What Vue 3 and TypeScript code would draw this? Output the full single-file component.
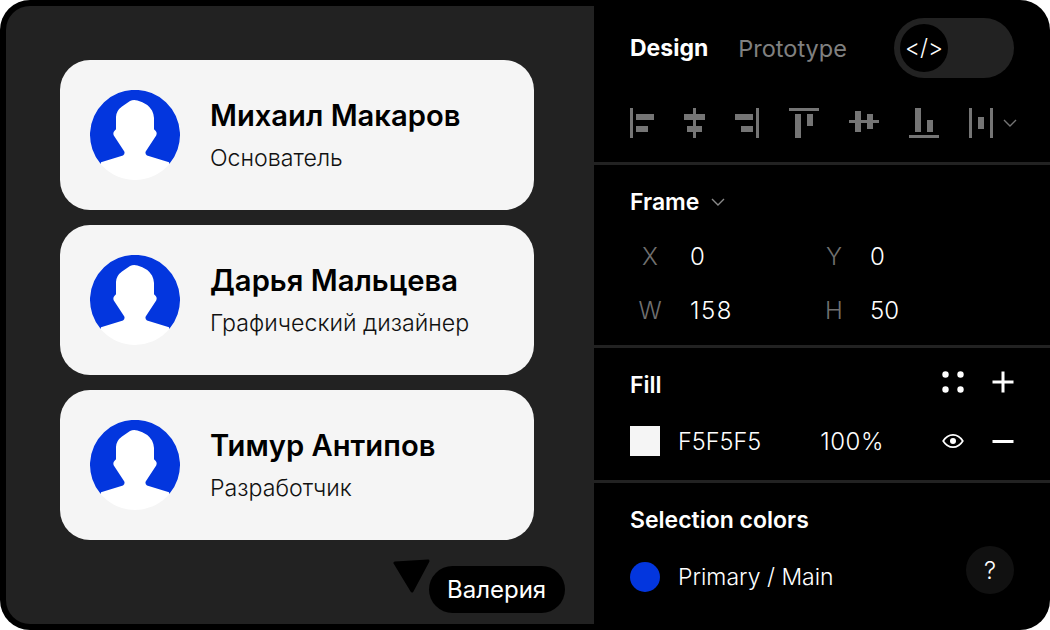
<template>
    <div class="frame">
        <section class="canvas">
            <div v-for="person in people" :key="person.name" class="card">
                <svg class="avatar" viewBox="0 0 90 90" width="90" height="90">
                    <circle cx="45" cy="45" r="45" fill="#fff" />
                    <path
                        fill="#0336DE"
                        d="M10.7 74 A45 45 0 1 1 79.3 74 L79 72.3 L57 65.4 Q54.8 64 55.7 61.5 L66.2 45.5 Q67.4 42.5 65.5 40.8 L64 39.2 L64 28 Q63.8 24 62 20.5 Q58 13.5 47.5 10.5 Q43.5 9.2 40 11 L32 16.5 Q26.3 20.5 26 27 L26 39.2 L24.6 40.8 Q22.6 42.5 23.8 45.5 L34.3 61.5 Q35.2 64 33 65.4 L11 72.3 Z"
                    />
                </svg>
                <div class="person">
                    <div class="person__name">{{ person.name }}</div>
                    <div class="person__role">{{ person.role }}</div>
                </div>
            </div>
            <svg class="cursor" viewBox="0 0 38 34" width="38" height="34">
                <path fill="#000" stroke="#000" stroke-width="3" stroke-linejoin="round" d="M2 4 L35 2 L19 32 Z" />
            </svg>
            <div class="tag">Валерия</div>
        </section>

        <aside class="panel">
            <div class="section section--top">
                <div class="tabs">
                    <span class="tab tab--active">Design</span>
                    <span class="tab">Prototype</span>
                    <div class="toggle">
                        <span class="toggle__knob">&lt;/&gt;</span>
                    </div>
                </div>
                <div class="aligns">
                    <svg v-for="(icon, i) in alignIcons" :key="i" class="align" :width="icon.w" height="30" :viewBox="`0 0 ${icon.w} 30`">
                        <rect v-for="(r, j) in icon.rects" :key="j" :x="r[0]" :y="r[1]" :width="r[2]" :height="r[3]" fill="#757575" />
                    </svg>
                    <svg class="aligns__more" width="14" height="8" viewBox="0 0 14 8">
                        <path d="M1 1 L7 7 L13 1" fill="none" stroke="#757575" stroke-width="1.4" />
                    </svg>
                </div>
            </div>

            <div class="section section--frame">
                <div class="title">
                    Frame
                    <svg class="title__chevron" width="14" height="8" viewBox="0 0 14 8">
                        <path d="M1 1 L7 7 L13 1" fill="none" stroke="#8a8a8a" stroke-width="1.4" />
                    </svg>
                </div>
                <div class="fields">
                    <div v-for="field in fields" :key="field.label" class="field">
                        <span class="field__label">{{ field.label }}</span>
                        <span class="field__value">{{ field.value }}</span>
                    </div>
                </div>
            </div>

            <div class="section section--fill">
                <div class="row">
                    <span class="title">Fill</span>
                    <div class="row__tools row__tools--raised">
                        <svg width="22" height="22" viewBox="0 0 22 22" fill="#fff">
                            <circle cx="3.5" cy="3.5" r="3.2" />
                            <circle cx="18.5" cy="3.5" r="3.2" />
                            <circle cx="3.5" cy="18.5" r="3.2" />
                            <circle cx="18.5" cy="18.5" r="3.2" />
                        </svg>
                        <svg width="22" height="22" viewBox="0 0 22 22" fill="#fff">
                            <rect x="0.5" y="9.5" width="21" height="3" />
                            <rect x="9.5" y="0.5" width="3" height="21" />
                        </svg>
                    </div>
                </div>
                <div class="row row--swatch">
                    <span class="swatch" />
                    <span class="hex">F5F5F5</span>
                    <span class="percent">100%</span>
                    <div class="row__tools">
                        <svg width="22" height="22" viewBox="0 0 22 22" fill="none">
                            <path d="M1.2 11 C4 6.4 7.4 4.8 11 4.8 C14.6 4.8 18 6.4 20.8 11 C18 15.6 14.6 17.2 11 17.2 C7.4 17.2 4 15.6 1.2 11 Z" stroke="#fff" stroke-width="1.7" />
                            <circle cx="11" cy="11" r="3" fill="#fff" />
                        </svg>
                        <svg width="22" height="22" viewBox="0 0 22 22" fill="#fff">
                            <rect x="0.5" y="10" width="21" height="3" />
                        </svg>
                    </div>
                </div>
            </div>

            <div class="section section--colors">
                <div class="title">Selection colors</div>
                <div class="row row--swatch row--color">
                    <span class="dot" />
                    <span>Primary / Main</span>
                </div>
                <button class="help">?</button>
            </div>
        </aside>
    </div>
</template>

<script setup lang="ts">
type AlignIcon = { w: number; rects: number[][] };

const people = [
    { name: 'Михаил Макаров', role: 'Основатель' },
    { name: 'Дарья Мальцева', role: 'Графический дизайнер' },
    { name: 'Тимур Антипов', role: 'Разработчик' }
];

const fields = [
    { label: 'X', value: '0' },
    { label: 'Y', value: '0' },
    { label: 'W', value: '158' },
    { label: 'H', value: '50' }
];

// rects are [x, y, w, h] measured from the reference
const alignIcons: AlignIcon[] = [
    { w: 24, rects: [[0, 0, 3, 30], [6, 6, 18, 6], [6, 18, 12, 6]] },
    { w: 21, rects: [[9, 0, 3, 30], [0, 6, 21, 6], [3, 18, 15, 6]] },
    { w: 24, rects: [[21, 0, 3, 30], [0, 6, 18, 6], [6, 18, 12, 6]] },
    { w: 30, rects: [[0, 0, 30, 3], [6, 6, 6, 24], [18, 6, 6, 12]] },
    { w: 30, rects: [[0, 12, 30, 3], [6, 3, 6, 21], [18, 6, 6, 15]] },
    { w: 30, rects: [[0, 27, 30, 3], [6, 0, 6, 24], [18, 12, 6, 12]] },
    { w: 24, rects: [[0, 0, 3, 30], [21, 0, 3, 30], [9, 9, 6, 12]] }
];
</script>

<style>
html,
body {
    margin: 0;
    background: #fff;
}
</style>

<style scoped>
.frame {
    width: 1050px;
    height: 630px;
    display: flex;
    background: #000;
    border-radius: 30px;
    overflow: hidden;
    font-family: Inter, 'Noto Sans', sans-serif;
    color: #fff;
}
.canvas {
    position: relative;
    flex: none;
    box-sizing: border-box;
    width: 588px;
    height: 618px;
    margin: 6px 0 6px 6px;
    padding: 54px 60px 54px 54px;
    display: flex;
    flex-direction: column;
    gap: 15px;
    background: #222;
    border-radius: 24px 0 0 24px;
}
.card {
    height: 150px;
    box-sizing: border-box;
    padding: 0 30px;
    display: flex;
    align-items: center;
    gap: 30px;
    background: #f5f5f5;
    border-radius: 30px;
    color: #000;
}
.avatar {
    flex: none;
}
.person__name {
    font-size: 29.2px;
    line-height: 36px;
    font-weight: 600;
}
.person__role {
    margin-top: 9px;
    font-size: 23.2px;
    line-height: 30px;
    font-weight: 300;
    color: #111;
}
.cursor {
    position: absolute;
    left: 387px;
    top: 553px;
}
.tag {
    position: absolute;
    left: 423px;
    top: 560px;
    height: 47px;
    padding: 0 19px 0 18px;
    display: flex;
    align-items: center;
    background: #000;
    border-radius: 24px;
    font-size: 24px;
    font-weight: 400;
}
.panel {
    flex: 1;
    min-width: 0;
    display: flex;
    flex-direction: column;
}
.section {
    position: relative;
    box-sizing: border-box;
    padding: 0 36px;
    border-bottom: 3px solid #222;
}
.section--top {
    height: 165px;
    padding-top: 18px;
}
.section--frame {
    height: 183px;
    padding-top: 22px;
}
.section--fill {
    height: 135px;
    padding-top: 22px;
}
.section--colors {
    flex: 1;
    padding-top: 22px;
    border-bottom: none;
}
.tabs {
    height: 60px;
    display: flex;
    align-items: center;
}
.tab {
    margin-right: 30px;
    font-size: 23.5px;
    font-weight: 400;
    color: #808080;
}
.tab--active {
    font-size: 23px;
    font-weight: 700;
    color: #fff;
}
.toggle {
    margin-left: auto;
    flex: none;
    box-sizing: border-box;
    width: 120px;
    height: 60px;
    padding: 6px;
    background: #222;
    border-radius: 30px;
}
.toggle__knob {
    width: 48px;
    height: 48px;
    display: flex;
    align-items: center;
    justify-content: center;
    background: #000;
    border-radius: 50%;
    font-size: 23px;
    font-weight: 300;
}
.aligns {
    margin-top: 30px;
    display: flex;
    align-items: center;
}
.align {
    display: block;
    flex: none;
    margin-right: 30px;
}
.aligns .align:nth-child(7) {
    margin-right: 10px;
}
.aligns__more {
    flex: none;
    margin-right: -2px;
}
.title {
    height: 30px;
    display: flex;
    align-items: center;
    font-size: 23px;
    font-weight: 600;
}
.title__chevron {
    margin-left: 12px;
}
.fields {
    margin-top: 24px;
    display: grid;
    grid-template-columns: 180px 180px;
    row-gap: 24px;
}
.field {
    display: flex;
    align-items: center;
    gap: 20px;
    height: 30px;
    font-size: 24px;
    font-weight: 300;
}
.field:nth-child(even) {
    gap: 16px;
}
.field:nth-child(even) .field__label {
    margin-left: 4px;
}
.field:nth-child(3) .field__value {
    letter-spacing: 1.5px;
}
.field__label {
    width: 40px;
    text-align: center;
    color: #707070;
}
.row {
    height: 30px;
    display: flex;
    align-items: center;
}
.row__tools {
    margin-left: auto;
    display: flex;
    align-items: center;
    gap: 28px;
}
.row__tools--raised {
    margin-bottom: 6px;
}
.row__tools svg {
    display: block;
}
.row--swatch {
    margin-top: 26px;
    font-size: 23px;
    font-weight: 300;
}
.row--color {
    margin-top: 27px;
}
.swatch {
    width: 30px;
    height: 30px;
    margin-right: 18px;
    background: #f5f5f5;
}
.dot {
    width: 30px;
    height: 30px;
    margin-right: 18px;
    background: #0336de;
    border-radius: 50%;
}
.hex {
    font-size: 23.5px;
}
.percent {
    margin-left: 59px;
    font-size: 24px;
    letter-spacing: 0.5px;
}
.help {
    position: absolute;
    right: 36px;
    bottom: 36px;
    width: 48px;
    height: 48px;
    padding: 0;
    border: none;
    border-radius: 50%;
    background: #111;
    color: #fff;
    font: 300 24px Inter, sans-serif;
}
</style>
